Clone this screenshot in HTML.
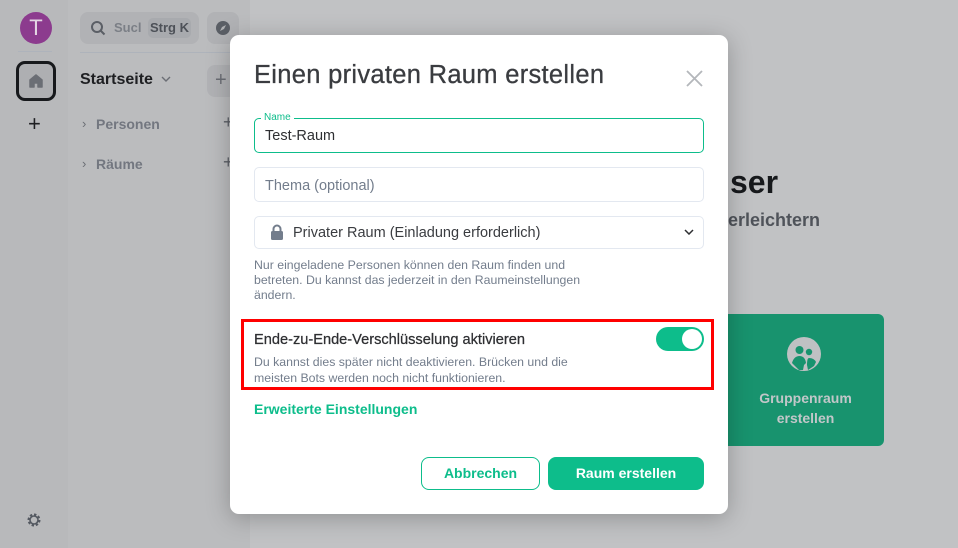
<!DOCTYPE html>
<html><head><meta charset="utf-8"><style>
*{box-sizing:border-box;margin:0;padding:0}
body{width:958px;height:548px;overflow:hidden;font-family:"Liberation Sans",sans-serif;background:#c1c2c4;position:relative}
.abs{position:absolute}
.left{left:0;top:0;width:68px;height:548px;background:#b8b9bb}
.side{left:68px;top:0;width:182px;height:548px;background:#bbbcbe}
.main{left:250px;top:0;width:708px;height:548px;background:#c1c2c4}
.dlg{left:230px;top:35px;width:498px;height:479px;background:#fff;border-radius:9px;box-shadow:0 4px 24px rgba(0,0,0,.25)}
.t{position:absolute;white-space:nowrap}
.field{position:absolute;left:24px;width:450px;border:1px solid #e3e8f0;border-radius:5px}
</style></head><body>
<div class="abs left"></div>
<div class="abs side"></div>
<div class="abs main"></div>
<!-- left column -->
<div class="abs" style="left:20px;top:12px;width:32px;height:32px;border-radius:50%;background:#8c3b8e;color:#e3d6e4;font-size:22px;text-align:center;line-height:32px">T</div>
<div class="abs" style="left:18px;top:51px;width:34px;height:1px;background:#aeb3bb"></div>
<div class="abs" style="left:16px;top:61px;width:40px;height:40px;border:3px solid #17191c;border-radius:9px;background:#aeafb2"></div>
<svg class="abs" style="left:27px;top:72px" width="18" height="18" viewBox="0 0 18 18"><path d="M3 8 L9 3 L15 8 V15 H11 V11 H7 V15 H3Z" fill="#6b6e75" stroke="#6b6e75" stroke-linejoin="round" stroke-width="1.5"/></svg>
<div class="t" style="left:28px;top:113px;font-size:22px;color:#1e1f22;line-height:22px">+</div>
<svg class="abs" style="left:26px;top:512px" width="16" height="16" viewBox="0 0 16 16"><circle cx="8" cy="8" r="5" fill="none" stroke="#545961" stroke-width="3" stroke-dasharray="2.2 1.7"/><circle cx="8" cy="8" r="4" fill="none" stroke="#545961" stroke-width="1.6"/></svg>
<!-- sidebar -->
<div class="abs" style="left:80px;top:12px;width:119px;height:32px;border-radius:8px;background:#b1b2b5"></div>
<svg class="abs" style="left:90px;top:20px" width="16" height="16" viewBox="0 0 16 16"><circle cx="7" cy="7" r="5" fill="none" stroke="#5b5f66" stroke-width="2"/><path d="M11 11 L14.5 14.5" stroke="#5b5f66" stroke-width="2"/></svg>
<div class="t" style="left:114px;top:20px;font-size:13px;color:#7b7f86;font-weight:bold">Sucl</div>
<div class="abs" style="left:148px;top:18px;width:43px;height:20px;border-radius:5px;background:#a8aaae;color:#4d5158;font-size:13px;font-weight:bold;line-height:20px;text-align:center">Strg K</div>
<div class="abs" style="left:207px;top:12px;width:32px;height:32px;border-radius:8px;background:#b1b2b5"></div>
<svg class="abs" style="left:215px;top:20px" width="16" height="16" viewBox="0 0 16 16"><circle cx="8" cy="8" r="7" fill="#5b5f66"/><path d="M11 5 L9 9 L5 11 L7 7Z" fill="#b1b2b5"/></svg>
<div class="abs" style="left:80px;top:52px;width:170px;height:1px;background:#aeb3bb"></div>
<div class="t" style="left:80px;top:71px;font-size:16px;font-weight:bold;color:#1e1f22">Startseite</div>
<svg class="abs" style="left:161px;top:76px" width="10" height="6" viewBox="0 0 10 6"><path d="M1 1 L5 5 L9 1" fill="none" stroke="#6b6e75" stroke-width="1.4"/></svg>
<div class="abs" style="left:207px;top:65px;width:40px;height:32px;border-radius:8px;background:#b1b2b5;color:#6b6e75;font-size:20px;line-height:30px;padding-left:8px">+</div>
<div class="t" style="left:82px;top:116px;font-size:13px;color:#6b6e75">›</div>
<div class="t" style="left:96px;top:116px;font-size:14px;font-weight:bold;color:#737780">Personen</div>
<div class="t" style="left:82px;top:156px;font-size:13px;color:#6b6e75">›</div>
<div class="t" style="left:96px;top:156px;font-size:14px;font-weight:bold;color:#737780">Räume</div>
<div class="t" style="left:223px;top:112px;font-size:18px;color:#5b5f66">+</div>
<div class="t" style="left:223px;top:152px;font-size:18px;color:#5b5f66">+</div>
<!-- main background -->
<div class="t" style="left:730px;top:164px;font-size:32px;font-weight:bold;color:#17191c">ser</div>
<div class="t" style="left:728px;top:210px;font-size:18px;font-weight:bold;color:#4f535a">erleichtern</div>
<div class="abs" style="left:727px;top:314px;width:157px;height:132px;background:#18936e;border-radius:0 6px 6px 0"></div>
<svg class="abs" style="left:787px;top:337px" width="34" height="34" viewBox="0 0 34 34"><circle cx="17" cy="17" r="17" fill="#bfc1c3"/><circle cx="12.5" cy="13" r="4" fill="#18936e"/><circle cx="22" cy="15" r="3.2" fill="#18936e"/><path d="M5 26 Q7 19 12.5 19 Q18 19 19 26 L17 28 L16 33 L12 33 Z" fill="#18936e"/><path d="M20 28 Q20 21 22 21 Q27 21 29 25 L27 29 L21 33Z" fill="#18936e"/></svg>
<div class="t" style="left:727px;top:388px;width:157px;text-align:center;font-size:14px;font-weight:bold;color:#c2c7c9;line-height:20px;white-space:normal">Gruppenraum<br>erstellen</div>
<!-- dialog -->
<div class="abs dlg">
  <div class="t" style="left:24px;top:26px;font-size:25.5px;color:#3a3c40;letter-spacing:0.3px;-webkit-text-stroke:0.3px #3a3c40">Einen privaten Raum erstellen</div>
  <svg class="abs" style="left:456px;top:35px" width="17" height="17" viewBox="0 0 17 17"><path d="M1 1 L16 16 M16 1 L1 16" stroke="#b4b7bb" stroke-width="1.8"/></svg>
  <div class="field" style="top:83px;height:35px;border:1px solid #0dbd8b"></div>
  <div class="t" style="left:31px;top:78px;font-size:10px;color:#0dbd8b;background:#fff;padding:0 3px;line-height:10px">Name</div>
  <div class="t" style="left:35px;top:93px;font-size:14.5px;color:#2e2f32">Test-Raum</div>
  <div class="field" style="top:132px;height:35px"></div>
  <div class="t" style="left:35px;top:143px;font-size:14.5px;color:#737d8c">Thema (optional)</div>
  <div class="field" style="top:181px;height:33px"></div>
  <svg class="abs" style="left:40px;top:189px" width="14" height="17" viewBox="0 0 14 17"><path d="M3.5 7 V5 A3.5 3.5 0 0 1 10.5 5 V7" fill="none" stroke="#737d8c" stroke-width="2"/><rect x="1" y="7" width="12" height="9" rx="1.5" fill="#737d8c"/></svg>
  <div class="t" style="left:63px;top:190px;font-size:14.5px;color:#3a3c40">Privater Raum (Einladung erforderlich)</div>
  <svg class="abs" style="left:454px;top:194px" width="10" height="6" viewBox="0 0 10 6"><path d="M1 1 L5 5 L9 1" fill="none" stroke="#2e2f32" stroke-width="1.5"/></svg>
  <div class="t" style="left:24px;top:223px;font-size:12.3px;color:#737d8c;line-height:15px">Nur eingeladene Personen können den Raum finden und<br>betreten. Du kannst das jederzeit in den Raumeinstellungen<br>ändern.</div>
  <div class="abs" style="left:11px;top:284px;width:473px;height:71px;border:3px solid #f00"></div>
  <div class="t" style="left:24px;top:297px;font-size:14.6px;color:#2e2f32;-webkit-text-stroke:0.25px #2e2f32">Ende-zu-Ende-Verschlüsselung aktivieren</div>
  <div class="abs" style="left:426px;top:292px;width:48px;height:24px;border-radius:12px;background:#0dbd8b"></div>
  <div class="abs" style="left:452px;top:294px;width:20px;height:20px;border-radius:50%;background:#fff"></div>
  <div class="t" style="left:24px;top:320px;font-size:12.3px;color:#737d8c;line-height:15.5px">Du kannst dies später nicht deaktivieren. Brücken und die<br>meisten Bots werden noch nicht funktionieren.</div>
  <div class="t" style="left:24px;top:366px;font-size:14px;font-weight:bold;color:#0dbd8b">Erweiterte Einstellungen</div>
  <div class="abs" style="left:191px;top:422px;width:119px;height:33px;border:1px solid #0dbd8b;border-radius:8px;color:#0dbd8b;font-size:14px;font-weight:bold;text-align:center;line-height:31px">Abbrechen</div>
  <div class="abs" style="left:318px;top:422px;width:156px;height:33px;background:#0dbd8b;border-radius:8px;color:#fff;font-size:14px;font-weight:bold;text-align:center;line-height:33px">Raum erstellen</div>
</div>
</body></html>
